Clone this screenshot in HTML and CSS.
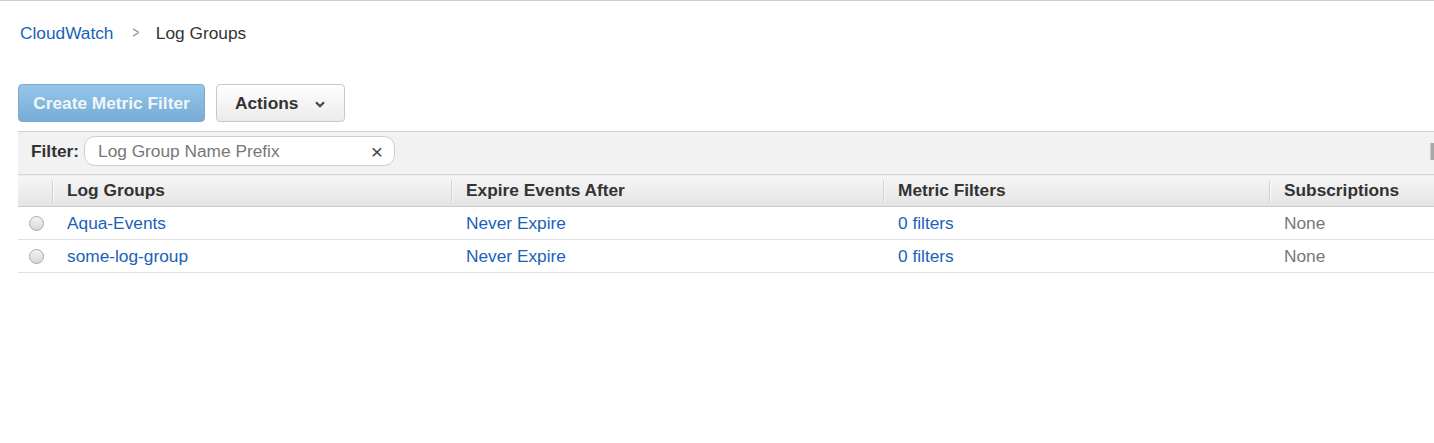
FILE: index.html
```html
<!DOCTYPE html>
<html>
<head>
<meta charset="utf-8">
<link rel="stylesheet" href="styles.css">
</head>
<body>
<div class="page">
  <nav class="breadcrumb">
    <a class="crumb-link" href="#">CloudWatch</a>
    <span class="crumb-sep">&gt;</span>
    <span class="crumb-current">Log Groups</span>
  </nav>
  <div class="content">
    <div class="toolbar">
      <button class="btn btn-primary">Create Metric Filter</button>
      <button class="btn btn-default">Actions
        <svg class="chevron" width="10" height="7" viewBox="0 0 10 7"><path d="M1 1.2 L5 5.2 L9 1.2" fill="none" stroke="#444" stroke-width="2.2"/></svg>
      </button>
    </div>
    <div class="filterbar">
      <span class="filter-label">Filter:</span>
      <div class="filter-input">
        <span class="placeholder">Log Group Name Prefix</span>
        <span class="clear">&#215;</span>
      </div>
      <span class="scroll-thumb"></span>
    </div>
    <table class="grid">
      <colgroup>
        <col class="c-radio"><col class="c-name"><col class="c-expire"><col class="c-metric"><col>
      </colgroup>
      <thead>
        <tr>
          <th></th>
          <th><span class="th-sep"></span>Log Groups</th>
          <th><span class="th-sep"></span>Expire Events After</th>
          <th><span class="th-sep"></span>Metric Filters</th>
          <th><span class="th-sep"></span>Subscriptions</th>
        </tr>
      </thead>
      <tbody>
        <tr>
          <td><span class="radio"></span></td>
          <td><a href="#">Aqua-Events</a></td>
          <td><a href="#">Never Expire</a></td>
          <td><a href="#">0 filters</a></td>
          <td class="muted">None</td>
        </tr>
        <tr>
          <td><span class="radio"></span></td>
          <td><a href="#">some-log-group</a></td>
          <td><a href="#">Never Expire</a></td>
          <td><a href="#">0 filters</a></td>
          <td class="muted">None</td>
        </tr>
      </tbody>
    </table>
  </div>
</div>
</body>
</html>
```
FILE: styles.css
```css
html, body {
  margin: 0;
  padding: 0;
  background: #fff;
  font-family: "Liberation Sans", Arial, sans-serif;
  font-size: 17.3px;
  color: #333;
}
.page {
  border-top: 1px solid #d0d0d0;
}
.breadcrumb {
  display: flex;
  align-items: center;
  height: 20px;
  margin-top: 22px;
  padding-left: 20px;
  line-height: 20px;
}
.crumb-link {
  color: #1a62b8;
  text-decoration: none;
}
.crumb-sep {
  color: #888;
  margin: 0 16px 0 17px;
  font-size: 16px;
  transform: scaleX(0.75);
}
.crumb-current {
  color: #333;
}
.content {
  padding-left: 18px;
  margin-top: 41px;
}
.toolbar {
  display: flex;
  gap: 11px;
  height: 38px;
}
.btn {
  font-family: "Liberation Sans", Arial, sans-serif;
  font-size: 17.3px;
  font-weight: bold;
  height: 38px;
  border-radius: 4px;
  padding: 0;
  display: flex;
  align-items: center;
  cursor: pointer;
}
.btn-primary {
  width: 187px;
  justify-content: center;
  color: rgba(255,255,255,0.9);
  background: linear-gradient(#94c6e9, #78acd6);
  border: 1px solid #7ea9cf;
}
.btn-default {
  width: 129px;
  padding-left: 18px;
  color: #333;
  background: linear-gradient(#ffffff, #ebebeb);
  border: 1px solid #c9c9c9;
}
.chevron {
  margin-left: 17px;
  margin-top: 2px;
}
.filterbar {
  position: relative;
  margin-top: 9px;
  height: 42px;
  box-sizing: content-box;
  border-top: 1px solid #cfcfcf;
  background: #f2f2f2;
  display: flex;
  align-items: flex-start;
  padding-left: 13px;
}
.filter-label {
  font-weight: bold;
  color: #333;
  line-height: 30px;
  margin-top: 4px;
}
.filter-input {
  margin-left: 5px;
  margin-top: 4px;
  width: 311px;
  height: 30px;
  background: #fff;
  border: 1px solid #cfcfcf;
  border-radius: 11px;
  display: flex;
  align-items: center;
  justify-content: space-between;
  padding: 0 11px 0 13px;
  box-sizing: border-box;
}
.placeholder {
  color: #777;
}
.clear {
  color: #444;
  font-size: 21px;
  line-height: 1;
}
.scroll-thumb {
  position: absolute;
  right: 0;
  top: 11px;
  width: 3px;
  height: 17px;
  background: #a8a8a8;
  border-left: 1px solid #c8c8c8;
}
.grid {
  width: 100%;
  border-collapse: collapse;
  table-layout: fixed;
}
.c-radio { width: 34px; }
.c-name { width: 399px; }
.c-expire { width: 432px; }
.c-metric { width: 386px; }
.grid th {
  position: relative;
  height: 31px;
  padding: 0 0 0 15px;
  text-align: left;
  font-weight: bold;
  color: #333;
  background: linear-gradient(#f6f6f6, #e4e4e4);
  border-bottom: 1px solid #cbcbcb;
  border-top: 1px solid #d6d6d6;
  white-space: nowrap;
}
.th-sep {
  position: absolute;
  left: 0;
  top: 6px;
  bottom: 4px;
  width: 1px;
  background: #cfcfcf;
  border-right: 1px solid #fafafa;
}
.grid td {
  height: 32px;
  padding: 0 0 0 15px;
  border-bottom: 1px solid #e0e0e0;
  white-space: nowrap;
}
.grid td:first-child {
  padding: 0 0 0 11px;
}
.grid a {
  color: #1a62b8;
  text-decoration: none;
}
.muted {
  color: #777;
}
.radio {
  display: block;
  width: 15px;
  height: 15px;
  box-sizing: border-box;
  border-radius: 50%;
  border: 1px solid #aaa;
  background: linear-gradient(#f4f4f4, #d6d6d6);
}
```
